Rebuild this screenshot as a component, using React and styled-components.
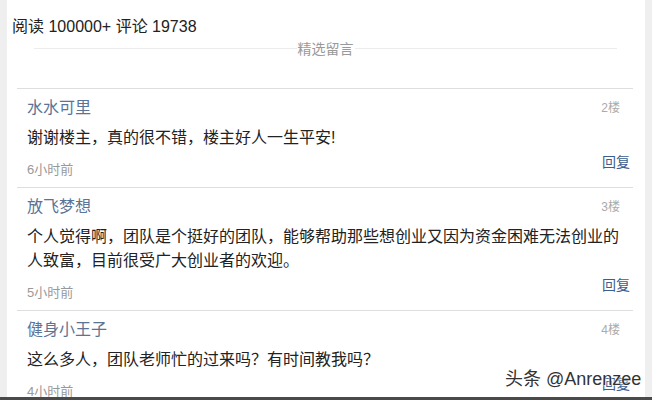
import React from "react";
import styled, { createGlobalStyle } from "styled-components";

const comments = [
  {
    name: "水水可里",
    floor: "2楼",
    text: "谢谢楼主，真的很不错，楼主好人一生平安!",
    time: "6小时前",
  },
  {
    name: "放飞梦想",
    floor: "3楼",
    text: "个人觉得啊，团队是个挺好的团队，能够帮助那些想创业又因为资金困难无法创业的人致富，目前很受广大创业者的欢迎。",
    time: "5小时前",
  },
  {
    name: "健身小王子",
    floor: "4楼",
    text: "这么多人，团队老师忙的过来吗？有时间教我吗？",
    time: "4小时前",
  },
];

const App = () => {
  return (
    <Page>
      <GlobalStyle />
      <Main>
        <Side />
        <Content>
          <Stats>阅读 100000+ 评论 19738</Stats>
          <SectionTitle>
            <span>精选留言</span>
          </SectionTitle>
          <List>
            {comments.map((item, index) => {
              return (
                <Comment key={index}>
                  <Head>
                    <Name>{item.name}</Name>
                    <Floor>{item.floor}</Floor>
                  </Head>
                  <Text>{item.text}</Text>
                  <Foot>
                    <Time>{item.time}</Time>
                    <Reply>回复</Reply>
                  </Foot>
                </Comment>
              );
            })}
          </List>
        </Content>
        <Side />
        <Watermark>头条 @Anrenzee</Watermark>
      </Main>
      <BottomBar />
    </Page>
  );
};

const GlobalStyle = createGlobalStyle`
  html, body {
    margin: 0;
    padding: 0;
    background: #efefef;
  }
`;

const Page = styled.div`
  width: 652px;
  height: 400px;
  display: flex;
  flex-direction: column;
  overflow: hidden;
  font-family: "Liberation Sans", "Noto Sans CJK SC", sans-serif;
`;

const Main = styled.div`
  flex: 1;
  display: flex;
  position: relative;
  overflow: hidden;
`;

const Side = styled.div`
  width: 7px;
  flex-shrink: 0;
  background: #efefef;
  &:last-of-type {
    width: 10px;
  }
`;

const Content = styled.div`
  flex: 1;
  background: #fff;
  padding: 15px 0 0 5px;
`;

const Stats = styled.div`
  font-size: 16px;
  line-height: 24px;
  color: #222;
`;

const SectionTitle = styled.div`
  position: relative;
  margin: -2px 28px 0 22px;
  height: 22px;
  display: flex;
  justify-content: center;
  align-items: center;
  &::before {
    content: "";
    position: absolute;
    left: 0;
    right: 0;
    top: 11px;
    border-top: 1px solid #ececec;
  }
  span {
    position: relative;
    background: #fff;
    padding: 0 1px;
    font-size: 14px;
    color: #999;
  }
`;

const List = styled.div`
  margin: 29px 12px 0 5px;
  border-top: 1px solid #dedede;
`;

const Comment = styled.div`
  padding: 5px 10px 7px 10px;
  border-bottom: 1px solid #dedede;
`;

const Head = styled.div`
  display: flex;
  justify-content: space-between;
  align-items: center;
  height: 24px;
`;

const Name = styled.div`
  font-size: 16px;
  color: #5a7396;
`;

const Floor = styled.div`
  font-size: 12px;
  color: #aaa;
  padding-right: 3px;
`;

const Text = styled.div`
  margin-top: 8px;
  font-size: 16px;
  line-height: 24px;
  color: #222;
  padding-right: 2px;
`;

const Foot = styled.div`
  margin-top: 2px;
  height: 28px;
  display: flex;
  justify-content: space-between;
`;

const Time = styled.div`
  align-self: flex-end;
  font-size: 13px;
  line-height: 20px;
  color: #999;
`;

const Reply = styled.div`
  align-self: flex-start;
  font-size: 14px;
  line-height: 20px;
  color: #3c5d8e;
  margin-right: -7px;
`;

const Watermark = styled.div`
  position: absolute;
  left: 505px;
  top: 368px;
  font-size: 18px;
  line-height: 22px;
  color: #333;
  text-shadow: 0 0 2px #fff, 0 0 2px #fff;
  white-space: nowrap;
`;

const BottomBar = styled.div`
  height: 3px;
  background: #4a4a4a;
`;

export default App;
